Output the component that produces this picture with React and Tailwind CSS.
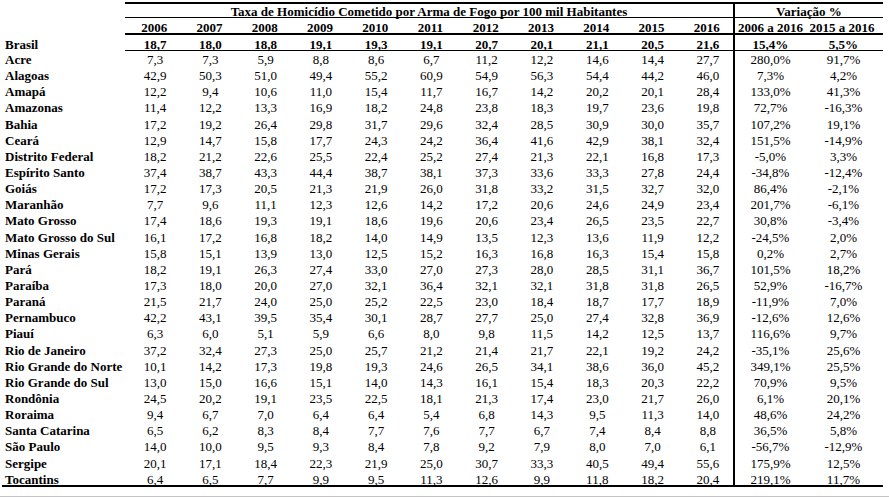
import React from 'react';

const years = ['2006', '2007', '2008', '2009', '2010', '2011', '2012', '2013', '2014', '2015', '2016'];

const brasil = ['18,7', '18,0', '18,8', '19,1', '19,3', '19,1', '20,7', '20,1', '21,1', '20,5', '21,6', '15,4%', '5,5%'];

const rows = [
  ['Acre', '7,3', '7,3', '5,9', '8,8', '8,6', '6,7', '11,2', '12,2', '14,6', '14,4', '27,7', '280,0%', '91,7%'],
  ['Alagoas', '42,9', '50,3', '51,0', '49,4', '55,2', '60,9', '54,9', '56,3', '54,4', '44,2', '46,0', '7,3%', '4,2%'],
  ['Amapá', '12,2', '9,4', '10,6', '11,0', '15,4', '11,7', '16,7', '14,2', '20,2', '20,1', '28,4', '133,0%', '41,3%'],
  ['Amazonas', '11,4', '12,2', '13,3', '16,9', '18,2', '24,8', '23,8', '18,3', '19,7', '23,6', '19,8', '72,7%', '-16,3%'],
  ['Bahia', '17,2', '19,2', '26,4', '29,8', '31,7', '29,6', '32,4', '28,5', '30,9', '30,0', '35,7', '107,2%', '19,1%'],
  ['Ceará', '12,9', '14,7', '15,8', '17,7', '24,3', '24,2', '36,4', '41,6', '42,9', '38,1', '32,4', '151,5%', '-14,9%'],
  ['Distrito Federal', '18,2', '21,2', '22,6', '25,5', '22,4', '25,2', '27,4', '21,3', '22,1', '16,8', '17,3', '-5,0%', '3,3%'],
  ['Espírito Santo', '37,4', '38,7', '43,3', '44,4', '38,7', '38,1', '37,3', '33,6', '33,3', '27,8', '24,4', '-34,8%', '-12,4%'],
  ['Goiás', '17,2', '17,3', '20,5', '21,3', '21,9', '26,0', '31,8', '33,2', '31,5', '32,7', '32,0', '86,4%', '-2,1%'],
  ['Maranhão', '7,7', '9,6', '11,1', '12,3', '12,6', '14,2', '17,2', '20,6', '24,6', '24,9', '23,4', '201,7%', '-6,1%'],
  ['Mato Grosso', '17,4', '18,6', '19,3', '19,1', '18,6', '19,6', '20,6', '23,4', '26,5', '23,5', '22,7', '30,8%', '-3,4%'],
  ['Mato Grosso do Sul', '16,1', '17,2', '16,8', '18,2', '14,0', '14,9', '13,5', '12,3', '13,6', '11,9', '12,2', '-24,5%', '2,0%'],
  ['Minas Gerais', '15,8', '15,1', '13,9', '13,0', '12,5', '15,2', '16,3', '16,8', '16,3', '15,4', '15,8', '0,2%', '2,7%'],
  ['Pará', '18,2', '19,1', '26,3', '27,4', '33,0', '27,0', '27,3', '28,0', '28,5', '31,1', '36,7', '101,5%', '18,2%'],
  ['Paraíba', '17,3', '18,0', '20,0', '27,0', '32,1', '36,4', '32,1', '32,1', '31,8', '31,8', '26,5', '52,9%', '-16,7%'],
  ['Paraná', '21,5', '21,7', '24,0', '25,0', '25,2', '22,5', '23,0', '18,4', '18,7', '17,7', '18,9', '-11,9%', '7,0%'],
  ['Pernambuco', '42,2', '43,1', '39,5', '35,4', '30,1', '28,7', '27,7', '25,0', '27,4', '32,8', '36,9', '-12,6%', '12,6%'],
  ['Piauí', '6,3', '6,0', '5,1', '5,9', '6,6', '8,0', '9,8', '11,5', '14,2', '12,5', '13,7', '116,6%', '9,7%'],
  ['Rio de Janeiro', '37,2', '32,4', '27,3', '25,0', '25,7', '21,2', '21,4', '21,7', '22,1', '19,2', '24,2', '-35,1%', '25,6%'],
  ['Rio Grande do Norte', '10,1', '14,2', '17,3', '19,8', '19,3', '24,6', '26,5', '34,1', '38,6', '36,0', '45,2', '349,1%', '25,5%'],
  ['Rio Grande do Sul', '13,0', '15,0', '16,6', '15,1', '14,0', '14,3', '16,1', '15,4', '18,3', '20,3', '22,2', '70,9%', '9,5%'],
  ['Rondônia', '24,5', '20,2', '19,1', '23,5', '22,5', '18,1', '21,3', '17,4', '23,0', '21,7', '26,0', '6,1%', '20,1%'],
  ['Roraima', '9,4', '6,7', '7,0', '6,4', '6,4', '5,4', '6,8', '14,3', '9,5', '11,3', '14,0', '48,6%', '24,2%'],
  ['Santa Catarina', '6,5', '6,2', '8,3', '8,4', '7,7', '7,6', '7,7', '6,7', '7,4', '8,4', '8,8', '36,5%', '5,8%'],
  ['São Paulo', '14,0', '10,0', '9,5', '9,3', '8,4', '7,8', '9,2', '7,9', '8,0', '7,0', '6,1', '-56,7%', '-12,9%'],
  ['Sergipe', '20,1', '17,1', '18,4', '22,3', '21,9', '25,0', '30,7', '33,3', '40,5', '49,4', '55,6', '175,9%', '12,5%'],
  ['Tocantins', '6,4', '6,5', '7,7', '9,9', '9,5', '11,3', '12,6', '9,9', '11,8', '18,2', '20,4', '219,1%', '11,7%'],
];

// year value cell / variation value cells
const Cell = ({ i, v, extra }) => {
  if (i === 11) {
    return <div className={'border-l-2 border-black text-center ' + extra}>{v}</div>;
  }
  if (i === 12) {
    return <div className={'text-center pr-[2px] ' + extra}>{v}</div>;
  }
  return <div className={'text-center pl-[5px] ' + extra}>{v}</div>;
};

export default function App() {
  return (
    <div
      className="w-[889px] h-[497px] bg-white border-b border-[#c4c4c4] pl-[2px] pt-[2px] text-black text-[13px] overflow-hidden"
      style={{ fontFamily: '"Liberation Serif", "Times New Roman", serif' }}
    >
      <div className="grid grid-cols-[123px_repeat(11,55.27px)_73px_77px] w-[881px]">
        {/* header row 1 */}
        <div className="h-[16px]" />
        <div className="col-span-11 h-[16px] border-t-2 border-b border-black text-center font-bold leading-[14px] pt-[1px]">
          Taxa de Homicídio Cometido por Arma de Fogo por 100 mil Habitantes
        </div>
        <div className="col-span-2 h-[16px] border-t-2 border-b border-l-2 border-black text-center font-bold leading-[14px] pt-[1px]">
          Variação %
        </div>

        {/* header row 2 */}
        <div className="h-[17px]" />
        {years.map((y) => (
          <div key={y} className="h-[17px] border-b-2 border-black text-center font-bold leading-[15px] pt-[2px] pl-[3px]">
            {y}
          </div>
        ))}
        <div className="h-[17px] border-b-2 border-l-2 border-black text-center font-bold leading-[15px] pt-[2px] whitespace-nowrap">
          2006 a 2016
        </div>
        <div className="h-[17px] border-b-2 border-black text-center font-bold leading-[15px] pt-[2px] pr-[5px] whitespace-nowrap">
          2015 a 2016
        </div>

        {/* Brasil */}
        <div className="h-[16px] font-bold leading-[15px] pt-[2px] pl-[3px]">Brasil</div>
        {brasil.map((v, i) => (
          <Cell key={i} i={i} v={v} extra="h-[16px] border-b border-black font-bold leading-[15px] pt-[2px]" />
        ))}

        {/* states */}
        {rows.map((r, ri) => {
          const last = ri === rows.length - 1;
          const line = last ? ' border-b-2 border-black' : '';
          return (
            <React.Fragment key={r[0]}>
              <div className={'h-[16.15px] font-bold leading-[16px] pt-[1px] pl-[3px] whitespace-nowrap' + line}>{r[0]}</div>
              {r.slice(1).map((v, i) => (
                <Cell key={i} i={i} v={v} extra={'h-[16.15px] leading-[16px] pt-[1px]' + line} />
              ))}
            </React.Fragment>
          );
        })}
      </div>
    </div>
  );
}
